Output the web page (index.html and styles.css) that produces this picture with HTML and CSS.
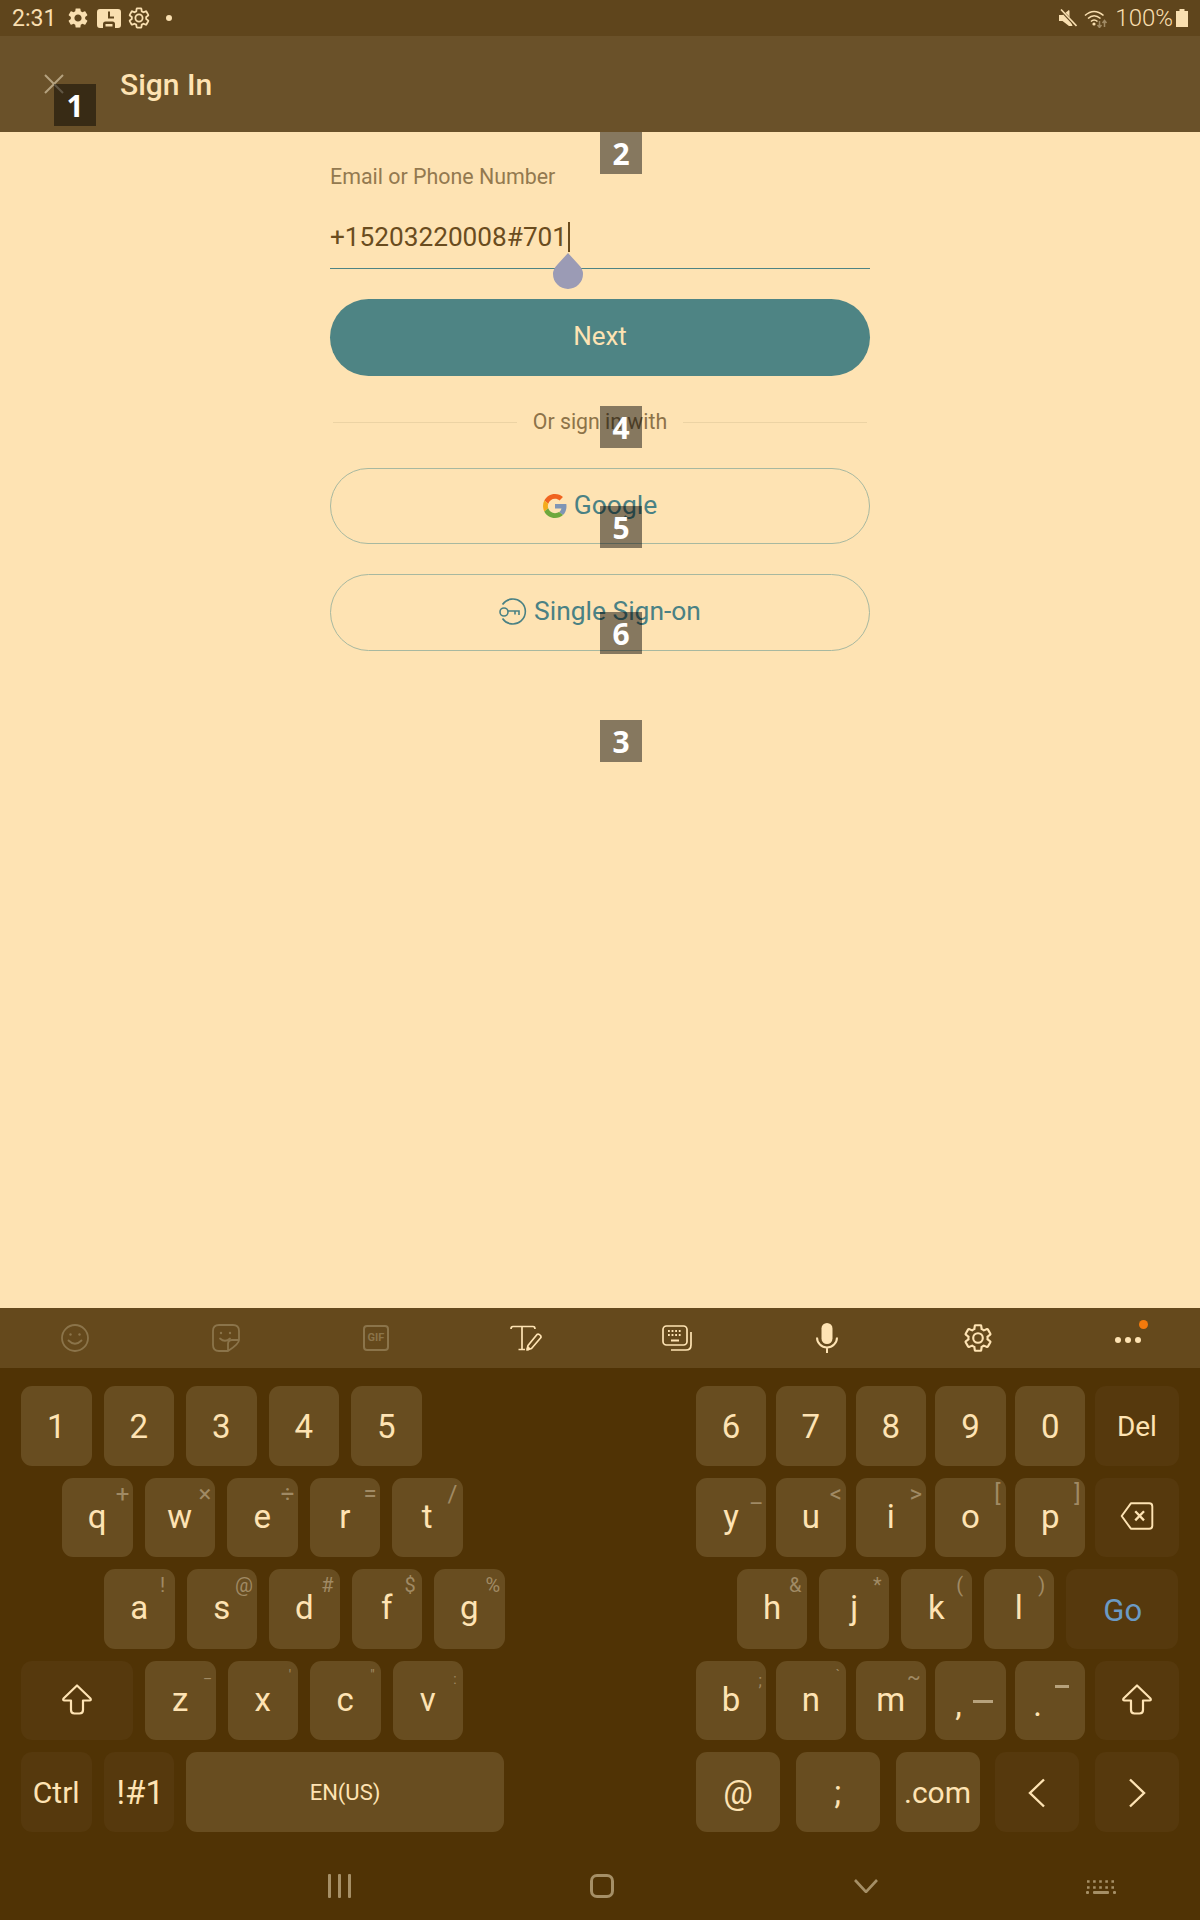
FILE: index.html
```html
<!DOCTYPE html>
<html lang="en">
<head>
    <meta charset="UTF-8">
    <title>Sign In</title>
    <link rel="stylesheet" href="styles.css">
</head>
<body>
    <svg class="defs" width="0" height="0">
        <symbol id="gear" viewBox="0 0 24 24">
            <path d="M19.14 12.94c.04-.3.06-.61.06-.94 0-.32-.02-.64-.07-.94l2.03-1.58a.49.49 0 0 0 .12-.61l-1.92-3.32a.488.488 0 0 0-.59-.22l-2.39.96c-.5-.38-1.03-.7-1.62-.94l-.36-2.54a.484.484 0 0 0-.48-.41h-3.84c-.24 0-.43.17-.47.41l-.36 2.54c-.59.24-1.13.57-1.62.94l-2.39-.96c-.22-.08-.47 0-.59.22L2.74 8.87c-.12.21-.08.47.12.61l2.03 1.58c-.05.3-.09.63-.09.94s.02.64.07.94l-2.03 1.58a.49.49 0 0 0-.12.61l1.92 3.32c.12.22.37.29.59.22l2.39-.96c.5.38 1.03.7 1.62.94l.36 2.54c.05.24.24.41.48.41h3.84c.24 0 .44-.17.47-.41l.36-2.54c.59-.24 1.13-.56 1.62-.94l2.39.96c.22.08.47 0 .59-.22l1.92-3.32c.12-.22.07-.47-.12-.61l-2.01-1.58zM12 15.6c-1.98 0-3.6-1.62-3.6-3.6s1.62-3.6 3.6-3.6 3.6 1.62 3.6 3.6-1.62 3.6-3.6 3.6z"/>
        </symbol>
        <symbol id="shift" viewBox="0 0 32 32">
            <path d="M16 2.500L29.500 15.500Q30.500 17.500 28.500 17.500H22V27Q22 30.500 18.500 30.500H13.500Q10 30.500 10 27V17.500H3.500Q1.500 17.500 2.500 15.500Z" fill="none" stroke="currentColor" stroke-width="2.200" stroke-linejoin="round"/>
        </symbol>
    </svg>

    <div class="status-bar">
        <div class="status-left">
            <span class="clock">2:31</span>
            <svg class="st-gear" viewBox="0 0 24 24"><use href="#gear"/></svg>
            <svg class="st-save" viewBox="0 0 24 19">
                <path d="M3 0H21a3 3 0 0 1 3 3V16a3 3 0 0 1-3 3H18V15Q18 12.500 15.500 12.500H8.500Q6 12.500 6 15V19H3a3 3 0 0 1-3-3V3a3 3 0 0 1 3-3z" fill="currentColor"/>
                <path d="M12 2.500V8.500H17" fill="none" stroke="#5f451c" stroke-width="2"/>
                <path d="M8.500 15H15.500V17.500H8.500z" fill="currentColor"/>
            </svg>
            <svg class="st-gear st-gear-line" viewBox="0 0 24 24"><use href="#gear"/></svg>
            <span class="st-dot"></span>
        </div>
        <div class="status-right">
            <svg class="st-mute" viewBox="0 0 18 18">
                <path d="M0 6H3.500L10 1V6.500L13.500 17H10L3.500 12H0z" fill="currentColor"/>
                <path d="M10 1.500V13" stroke="currentColor" stroke-width="1"/>
                <path d="M2 1L17 17" stroke="#5f451c" stroke-width="3"/>
                <path d="M2 0.500L17.500 17" stroke="currentColor" stroke-width="1.600"/>
            </svg>
            <svg class="st-wifi" viewBox="0 0 24 19">
                <g fill="none" stroke="currentColor" stroke-width="1.600">
                    <path d="M1 6.500Q10 -1.500 19.500 6.500"/>
                    <path d="M4 9.500Q10 4 16.500 9.500"/>
                    <path d="M7 12.500Q10 9.500 13.500 12.500"/>
                </g>
                <circle cx="10" cy="15" r="1.600" fill="currentColor"/>
                <path d="M15.500 12V18M13.500 16L15.500 18.500L17.500 16M20.500 18V12M18.500 14L20.500 11.500L22.500 14" fill="none" stroke="#a08a64" stroke-width="1.500"/>
            </svg>
            <span class="battery-text">100%</span>
            <svg class="st-battery" viewBox="0 0 12 18"><path d="M3.500 0H8.500V2H12V18H0V2H3.500z" fill="currentColor"/></svg>
        </div>
    </div>

    <header class="app-bar">
        <svg class="close-icon" viewBox="0 0 20 20"><path d="M1 1L19 19M19 1L1 19" stroke="currentColor" stroke-width="2"/></svg>
        <h1>Sign In</h1>
    </header>

    <main class="content">
        <div class="form">
            <div class="field-label">Email or Phone Number</div>
            <div class="field">
                <span>+15203220008#701</span><span class="caret"></span>
                <svg class="handle" viewBox="0 0 30 36"><path d="M15 0L25.500 11.500Q30 16 30 21A15 15 0 0 1 0 21Q0 16 4.500 11.500z"/></svg>
            </div>
            <button class="btn-primary">Next</button>
            <div class="divider"><span class="rule"></span><span class="divider-text">Or sign in with</span><span class="rule"></span></div>
            <button class="btn-outline btn-google">
                <svg class="g-logo" viewBox="0 0 48 48">
                    <path fill="#f0631f" d="M24 9.500c3.500 0 6.700 1.300 9.100 3.500l6.800-6.800C35.800 2.400 30.300 0 24 0 14.600 0 6.500 5.400 2.600 13.200l7.900 6.200C12.400 13.600 17.700 9.500 24 9.500z"/>
                    <path fill="#7f95b5" d="M47 24.500c0-1.600-.2-3.100-.4-4.500H24v9h12.900c-.6 3-2.200 5.500-4.700 7.200l7.700 6C44.400 38 47 31.900 47 24.500z"/>
                    <path fill="#f5ab1a" d="M10.500 28.600c-.5-1.400-.8-3-.8-4.600s.3-3.200.8-4.600l-7.900-6.200C.9 16.500 0 20.100 0 24s.9 7.500 2.600 10.800l7.900-6.200z"/>
                    <path fill="#6ea83c" d="M24 48c6.500 0 11.900-2.100 15.900-5.800l-7.700-6c-2.200 1.500-4.900 2.300-8.200 2.300-6.300 0-11.600-4.200-13.500-9.900l-7.900 6.200C6.500 42.600 14.600 48 24 48z"/>
                </svg>
                <span>Google</span>
            </button>
            <button class="btn-outline btn-sso">
                <svg class="key-icon" viewBox="0 0 28 27" fill="none" stroke="currentColor" stroke-width="1.600">
                    <path d="M3.500 6.500A12.500 12.500 0 1 1 3.500 20.500"/>
                    <circle cx="5" cy="14" r="4"/>
                    <path d="M9 13H20V17M16 13V16.500"/>
                </svg>
                <span>Single Sign-on</span>
            </button>
        </div>
    </main>

    <div class="kb-toolbar">
        <div class="tool tool-dim">
            <svg class="i28" viewBox="0 0 28 28" fill="none" stroke="currentColor" stroke-width="1.800"><circle cx="14" cy="14" r="13"/><path d="M7.500 16.500Q14 23 20.500 16.500" stroke-linecap="round"/><circle cx="9.500" cy="10.500" r="1.200" fill="currentColor" stroke="none"/><circle cx="18.500" cy="10.500" r="1.200" fill="currentColor" stroke="none"/></svg>
        </div>
        <div class="tool tool-dim">
            <svg class="i28" viewBox="0 0 28 28" fill="none" stroke="currentColor" stroke-width="1.800"><path d="M27 16V7Q27 1 21 1H7Q1 1 1 7V21Q1 27 7 27H16Q27 20 27 16zM27 16H20Q16 16 16 20V27"/><path d="M8 14.500Q13 19 18 14.500" stroke-linecap="round"/><circle cx="9" cy="9" r="1.200" fill="currentColor" stroke="none"/><circle cx="18" cy="9" r="1.200" fill="currentColor" stroke="none"/></svg>
        </div>
        <div class="tool tool-dim"><span class="gif-box">GIF</span></div>
        <div class="tool">
            <svg class="i-tpen" viewBox="0 0 32 26" fill="none" stroke="currentColor" stroke-width="1.700"><path d="M1 4Q1 1.500 3 1.500H23Q25 1.500 25 4M12 1.500V24.500M8.500 24.500H15"/><path d="M18 20.500L27 9.500Q28.500 8.500 30.500 10.500Q31.500 12 30.500 13L21.500 23.500L17 25z" stroke-linejoin="round"/><path d="M17.500 22.500L19.500 24.500" stroke-width="3"/></svg>
        </div>
        <div class="tool">
            <svg class="i-board" viewBox="0 0 30 26" fill="none" stroke="currentColor" stroke-width="1.700"><rect x="1" y="1" width="24" height="19" rx="3.500"/><path d="M29 7V20Q29 25 24 25H9"/><path d="M9 15.500H17" stroke-width="2"/><path d="M6 6H20M6 10H20" stroke-width="1.800" stroke-dasharray="1.800 1.800"/></svg>
        </div>
        <div class="tool">
            <svg class="i-mic" viewBox="0 0 22 30"><rect x="5.500" y="0" width="11" height="21" rx="5.500" fill="currentColor"/><path d="M1 14.500A10 10 0 0 0 21 14.500M11 24.500V30" fill="none" stroke="currentColor" stroke-width="2"/></svg>
        </div>
        <div class="tool">
            <svg class="i28 gear-line" viewBox="0 0 24 24"><use href="#gear"/></svg>
        </div>
        <div class="tool tool-more">
            <span class="dots"><i></i><i></i><i></i></span>
            <span class="notify"></span>
        </div>
    </div>

    <div class="keyboard">
        <div class="kb-row row-num">
            <div class="kb-left">
                <div class="key">1</div><div class="key">2</div><div class="key">3</div><div class="key">4</div><div class="key">5</div>
            </div>
            <div class="kb-right">
                <div class="key">6</div><div class="key">7</div><div class="key">8</div><div class="key">9</div><div class="key">0</div>
                <div class="key key-dark key-wide key-del">Del</div>
            </div>
        </div>
        <div class="kb-row row-alpha">
            <div class="kb-left row-q">
                <div class="key">q<span class="hint hint-lg">+</span></div>
                <div class="key">w<span class="hint hint-lg">×</span></div>
                <div class="key">e<span class="hint hint-lg">÷</span></div>
                <div class="key">r<span class="hint hint-lg">=</span></div>
                <div class="key">t<span class="hint hint-lg">/</span></div>
            </div>
            <div class="kb-right">
                <div class="key">y<span class="hint hint-lg">_</span></div>
                <div class="key">u<span class="hint hint-lg">&lt;</span></div>
                <div class="key">i<span class="hint hint-lg">&gt;</span></div>
                <div class="key">o<span class="hint hint-far">[</span></div>
                <div class="key">p<span class="hint hint-far">]</span></div>
                <div class="key key-dark key-wide">
                    <svg class="i-back" viewBox="0 0 38 32" fill="none" stroke="currentColor" stroke-width="2.200" stroke-linejoin="round"><path d="M12 1.500H33Q36.500 1.500 36.500 5V27Q36.500 30.500 33 30.500H12L1.500 16z"/><path d="M17 10.500L27 21M27 10.500L17 21" stroke-width="2.600"/></svg>
                </div>
            </div>
        </div>
        <div class="kb-row row-alpha">
            <div class="kb-left row-a">
                <div class="key">a<span class="hint">!</span></div>
                <div class="key">s<span class="hint hint-at">@</span></div>
                <div class="key">d<span class="hint">#</span></div>
                <div class="key">f<span class="hint">$</span></div>
                <div class="key">g<span class="hint">%</span></div>
            </div>
            <div class="kb-right row-h">
                <div class="key">h<span class="hint">&amp;</span></div>
                <div class="key">j<span class="hint">*</span></div>
                <div class="key">k<span class="hint">(</span></div>
                <div class="key">l<span class="hint">)</span></div>
                <div class="key key-dark key-go">Go</div>
            </div>
        </div>
        <div class="kb-row row-alpha">
            <div class="kb-left">
                <div class="key key-dark key-shift"><svg class="i-shift"><use href="#shift"/></svg></div>
                <div class="key">z<span class="hint hint-sm">–</span></div>
                <div class="key">x<span class="hint hint-sm hint-up">'</span></div>
                <div class="key">c<span class="hint hint-sm hint-up">"</span></div>
                <div class="key">v<span class="hint hint-sm">:</span></div>
            </div>
            <div class="kb-right">
                <div class="key">b<span class="hint hint-sm hint-low">;</span></div>
                <div class="key">n<span class="hint hint-sm hint-up">`</span></div>
                <div class="key">m<span class="hint">~</span></div>
                <div class="key key-punct"><span class="punct">,</span><span class="hint hint-comma"></span></div>
                <div class="key key-punct key-dot"><span class="punct">.</span><span class="hint hint-dot"></span></div>
                <div class="key key-dark key-wide"><svg class="i-shift"><use href="#shift"/></svg></div>
            </div>
        </div>
        <div class="kb-row row-num">
            <div class="kb-left">
                <div class="key key-dark key-sm">Ctrl</div>
                <div class="key key-dark key-sym">!#1</div>
                <div class="key key-space">EN(US)</div>
            </div>
            <div class="kb-right row-bottom">
                <div class="key key-wide">@</div>
                <div class="key key-wide">;</div>
                <div class="key key-wide key-sm">.com</div>
                <div class="key key-dark key-wide"><svg class="i-chev" viewBox="0 0 18 30"><path d="M16 1.500L2 15L16 28.500"/></svg></div>
                <div class="key key-dark key-wide"><svg class="i-chev" viewBox="0 0 18 30"><path d="M2 1.500L16 15L2 28.500"/></svg></div>
            </div>
        </div>
    </div>

    <nav class="nav-bar">
        <span class="nav-recent"><i></i><i></i><i></i></span>
        <span class="nav-home"></span>
        <svg class="nav-back" viewBox="0 0 24 14"><path d="M1 1L12 13L23 1"/></svg>
        <svg class="nav-kb" viewBox="0 0 30 16" fill="currentColor">
            <path d="M1 3.500H29M1 9.500H29" stroke="currentColor" stroke-width="2.600" stroke-dasharray="2.600 3.500"/>
            <rect x="7" y="13" width="16" height="3" rx="1"/><rect x="0" y="13" width="3" height="3" rx="1"/><rect x="27" y="13" width="3" height="3" rx="1"/>
        </svg>
    </nav>

    <span class="tag tag-1">1</span>
    <span class="tag tag-2">2</span>
    <span class="tag tag-3">3</span>
    <span class="tag tag-4">4</span>
    <span class="tag tag-5">5</span>
    <span class="tag tag-6">6</span>
</body>
</html>
```

FILE: styles.css
```css
* { box-sizing: border-box; }
html, body { margin: 0; padding: 0; }
body { position: relative; width: 1200px; height: 1920px; display: flex; flex-direction: column; background: #fee3b3; color: #fee3b3; font-family: Roboto, "Liberation Sans", sans-serif; overflow: hidden; }
svg { display: block; }
.defs { position: absolute; }

/* status bar */
.status-bar { height: 36px; background: #5f451c; display: flex; justify-content: space-between; align-items: center; padding: 0 12px; color: #f9dfb0; }
.status-left, .status-right { display: flex; align-items: center; }
.clock { font-size: 23px; width: 54px; }
.st-gear { width: 24px; height: 24px; fill: currentColor; margin-right: 6px; }
.st-gear-line { fill: none; stroke: currentColor; stroke-width: 1.8; margin: 0 0 0 6px; }
.st-save { width: 24px; height: 19px; margin-left: 1px; }
.st-dot { width: 6px; height: 6px; border-radius: 50%; background: currentColor; margin-left: 15px; }
.st-mute { width: 18px; height: 18px; margin-right: 7px; }
.st-wifi { width: 24px; height: 19px; margin-right: 7px; }
.battery-text { font-size: 24px; font-weight: 300; margin-right: 3px; }
.st-battery { width: 12px; height: 18px; }

/* app bar */
.app-bar { height: 96px; background: #6a5129; display: flex; align-items: center; padding-left: 44px; }
.close-icon { width: 20px; height: 20px; color: #b5a27f; margin-top: -1px; }
.app-bar h1 { margin: 0 0 0 56px; font-size: 30px; font-weight: 500; }

/* sign in form */
.content { flex: 1; display: flex; justify-content: center; }
.form { width: 540px; padding-top: 33px; }
.field-label { font-size: 21.4px; line-height: 24px; color: #93794f; }
.field { position: relative; display: flex; margin-top: 33px; height: 47px; border-bottom: 1px solid #4e8484; font-size: 26.2px; line-height: 30px; color: #6a4c1e; }
.caret { width: 2px; height: 30px; background: #6a4c1e; margin-left: 1px; }
.handle { position: absolute; left: 223px; top: 31px; width: 30px; height: 36px; fill: #9b9bb5; }
.btn-primary { display: block; width: 100%; height: 77px; margin-top: 30px; padding-bottom: 5px; border: none; border-radius: 39px; background: #4e8484; color: #fee3b3; font: 400 26px Roboto, sans-serif; }
.divider { display: flex; align-items: center; justify-content: space-between; height: 30px; margin-top: 31px; padding: 0 3px; color: #8d7349; font-size: 21.3px; }
.divider-text { margin-top: -2px; }
.rule { width: 184px; height: 1px; background: #ecd3a4; }
.btn-outline { display: flex; align-items: center; justify-content: center; width: 100%; height: 76px; margin-top: 31px; border: 1px solid #a7b8a0; border-radius: 39px; background: none; color: #4a8184; font: 26.4px Roboto, sans-serif; }
.btn-outline span { margin-top: -3px; }
.btn-sso { height: 77px; margin-top: 30px; }
.g-logo { width: 24px; height: 24px; margin-right: 7px; }
.key-icon { width: 28px; height: 27px; margin: -3px 7px 0 0; }

/* keyboard toolbar */
.kb-toolbar { height: 60px; flex: none; background: #65491c; display: grid; grid-template-columns: repeat(8, 150.4px); color: #fee3b3; }
.tool { display: flex; align-items: center; justify-content: center; position: relative; }
.tool-dim { color: #8b744a; }
.i28 { width: 28px; height: 28px; }
.gear-line { fill: none; stroke: currentColor; stroke-width: 1.6; width: 32px; height: 32px; }
.gif-box { width: 26px; height: 26px; border: 2px solid currentColor; border-radius: 4px; font-size: 11px; font-weight: 700; line-height: 22px; text-align: center; }
.i-tpen { width: 32px; height: 26px; }
.i-board { width: 30px; height: 26px; }
.i-mic { width: 22px; height: 30px; }
.dots { display: flex; gap: 4px; margin-top: 4px; }
.dots i { width: 6px; height: 6px; border-radius: 50%; background: currentColor; }
.notify { position: absolute; left: 86px; top: 12px; width: 9px; height: 9px; border-radius: 50%; background: #f47a0c; }

/* keys */
.keyboard { flex: none; height: 464px; background: #503305; padding-top: 18px; display: flex; flex-direction: column; gap: 12px; }
.kb-row { display: flex; height: 79.5px; }
.kb-left { width: 696px; display: flex; gap: 12px; padding-left: 21px; }
.kb-right { width: 484px; display: flex; gap: 9.6px; }
.row-q { padding-left: 62px; }
.row-a { padding-left: 104px; }
.row-h { padding-left: 41px; gap: 12px; }
.row-bottom { gap: 15.75px; }
.key { position: relative; width: 70.5px; flex: none; display: flex; align-items: center; justify-content: center; background: #684d20; border-radius: 11px; font-size: 33px; }
.row-num .key { padding-top: 2px; }
.row-alpha .key { padding-bottom: 2px; }
.kb-right .key { width: 70.2px; }
.kb-right .key.key-wide { width: 84px; }
.key-dark { background: #56390d; }
.key-shift { width: 112px; }
.key-space { width: 318px; font-size: 22px; }
.key-sm { font-size: 30px; }
.key-sym { padding-left: 3px; }
.key-del { font-size: 28px; }
.row-alpha .key.key-go { width: 112px; padding: 3px 0 0 2px; color: #6b9ac4; font-size: 31px; }
.hint { position: absolute; top: 6px; right: 5px; width: 14px; font-size: 20px; line-height: 20px; text-align: center; color: #a08a64; }
.hint-lg { font-size: 24px; right: 3px; }
.hint-far { right: 1px; font-size: 24px; top: 5px; }
.hint-at { right: 3px; width: 20px; }
.hint-sm { font-size: 14px; top: 8px; right: 1px; }
.hint-up { top: 4px; }
.hint-low { top: 10px; right: -1px; font-size: 16px; }
.key-punct { justify-content: flex-start; padding-left: 20px; }
.key-dot { padding-left: 18px; }
.punct { margin-top: 10px; }
.hint-comma { top: 39px; right: 13px; width: 20px; height: 3px; background: #b7a27c; }
.hint-dot { top: 24px; right: 16px; width: 14px; height: 3px; background: #b7a27c; }
.i-back { width: 34px; height: 28px; }
.i-shift { width: 32px; height: 32px; }
.i-chev { width: 18px; height: 30px; fill: none; stroke: currentColor; stroke-width: 2.4; }

/* nav bar */
.nav-bar { flex: none; height: 88px; background: #503305; display: flex; align-items: center; padding: 20px 0 0 328px; color: #a58f66; }
.nav-recent { display: flex; gap: 7px; width: 24px; height: 24px; }
.nav-recent i { width: 3px; height: 24px; background: currentColor; border-radius: 1px; }
.nav-home { width: 24px; height: 24px; margin-left: 238px; border: 3px solid currentColor; border-radius: 7px; }
.nav-back { width: 24px; height: 14px; margin-left: 240px; fill: none; stroke: currentColor; stroke-width: 2.6; }
.nav-kb { width: 30px; height: 16px; margin-left: 208px; }

/* numbered markers lying over the page */
.tag { position: absolute; left: 600px; width: 42px; height: 42px; background: rgba(0,0,0,0.47); color: #fff; font: 700 30px/44px "Noto Sans", sans-serif; text-align: center; }
.tag-1 { left: 54px; top: 84px; }
.tag-2 { top: 132px; }
.tag-3 { top: 720px; }
.tag-4 { top: 406px; }
.tag-5 { top: 506px; }
.tag-6 { top: 612px; }
```
